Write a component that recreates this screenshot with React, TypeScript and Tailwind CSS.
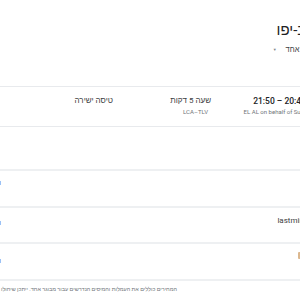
import React from "react";

const font = { fontFamily: "Roboto, 'Liberation Sans', Arial, sans-serif" };

export default function App() {
  return (
    <div
      dir="rtl"
      className="w-[300px] h-[300px] overflow-hidden bg-white text-[#202124]"
      style={font}
    >
      {/* Header */}
      <div className="h-[86px] pt-[20px]">
        <div className="whitespace-nowrap -mr-[50px] text-[15px] leading-[20px] text-[#202124]">
          תל אביב-יפו
        </div>
        <div className="mt-[5px] flex items-center gap-[9px] -mr-[13px] text-[7.5px] leading-[10px] text-[#3c4043] whitespace-nowrap">
          <span>כיוון אחד</span>
          <span className="text-[4px] text-[#80868b]">▼</span>
        </div>
      </div>

      {/* Flight row */}
      <div className="flex h-[40px] border-t border-[#e8eaed] pt-[9px]">
        <div className="w-[89px] shrink-0 whitespace-nowrap">
          <div className="-mr-[6px] text-[8.5px] leading-[10px] font-medium text-[#202124]">20:45 – 21:50</div>
          <div className="-mr-[16px] mt-[2px] text-[6px] leading-[8px] text-[#70757a]">
            <span dir="ltr">EL AL on behalf of Sun d'Or</span>
          </div>
        </div>
        <div className="w-[98px] shrink-0 whitespace-nowrap">
          <div className="text-[8px] leading-[10px] text-[#3c4043]">שעה 5 דקות</div>
          <div className="mt-[2px] mr-[3px] text-[6px] leading-[8px] text-[#70757a]">
            <span dir="ltr">LCA–TLV</span>
          </div>
        </div>
        <div className="whitespace-nowrap text-[8px] leading-[10px] text-[#3c4043]">טיסה ישירה</div>
      </div>

      {/* Booking options heading area (content lies outside the view) */}
      <div className="h-[43px] border-t border-[#e8eaed]" />

      {/* Option A */}
      <div className="flex h-[37px] justify-between border-t-2 border-[#eef0f2]">
        <div />
        <div className="mt-[10px] w-[1px] h-[4px] bg-[#9cc2f5]" />
      </div>

      {/* Option B */}
      <div className="flex h-[36px] justify-between border-t-2 border-[#eef0f2]">
        <div className="-mr-[33px] mt-[8px] whitespace-nowrap text-[8px] leading-[10px] text-[#3c4043]">
          <span dir="ltr">lastminute.com</span>
        </div>
        <div className="mt-[13px] w-[1px] h-[4px] bg-[#9cc2f5]" />
      </div>

      {/* Option C */}
      <div className="flex h-[37px] justify-between border-t-2 border-[#eef0f2]">
        <div className="-mr-[2px] mt-[8px] w-[4px] h-[7px] rounded-[1px] bg-[#dcb88f]" />
        <div className="mt-[15px] w-[1px] h-[4px] bg-[#9cc2f5]" />
      </div>

      {/* Footer */}
      <div className="border-t-2 border-[#eef0f2] pt-[4px] pr-[123px] whitespace-nowrap text-[5.5px] leading-[8px] text-[#70757a]">
        המחירים כוללים את העמלות והמיסים הנדרשים עבור מבוגר אחד. ייתכן שיחולו חיובים נוספים על כבודה.
      </div>
    </div>
  );
}
